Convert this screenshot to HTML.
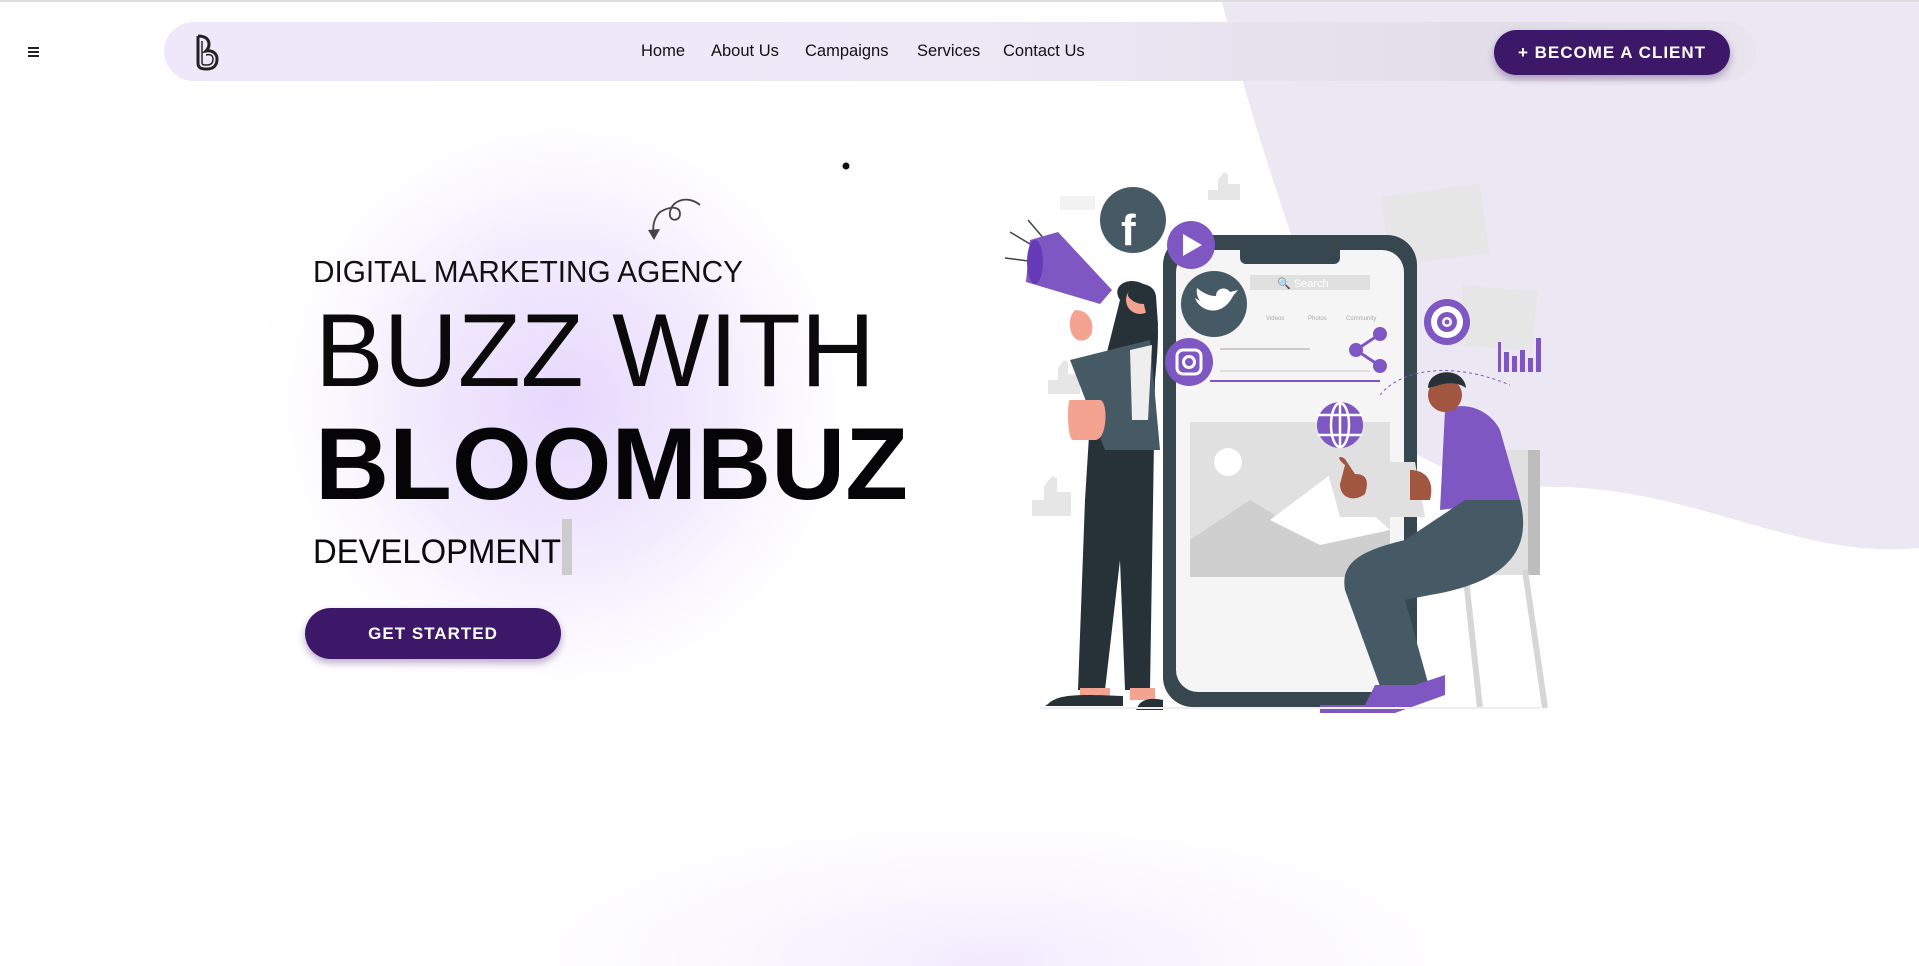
<!DOCTYPE html>
<html><head><meta charset="utf-8"><style>
*{margin:0;padding:0;box-sizing:border-box}
body{width:1919px;height:966px;overflow:hidden;background:#fff;font-family:"Liberation Sans",sans-serif;position:relative}
.abs{position:absolute}
.nav{left:164px;top:22px;width:1592px;height:59px;border-radius:30px;background:linear-gradient(90deg,#efe8fb 0%,#ede8f6 50%,#e2dde8 85%,#e8e5ec 100%)}
.nav a{position:absolute;top:20px;font-size:16.5px;color:#111;text-decoration:none;white-space:nowrap}
.btn{background:#3d1868;color:#fff;font-weight:bold;border-radius:30px;text-align:center;box-shadow:0 4px 8px rgba(60,20,100,.35);letter-spacing:1px}
</style></head><body>
<div class="abs" style="left:0;top:0;width:1919px;height:2px;background:#ddd"></div>
<svg class="abs" style="left:0;top:0" width="1919" height="966">
<defs>
<radialGradient id="g1" cx="563" cy="404" r="330" gradientUnits="userSpaceOnUse"><stop offset="0" stop-color="#e6d8fd"/><stop offset=".5" stop-color="#f3ecfd"/><stop offset="1" stop-color="#fff" stop-opacity="0"/></radialGradient>
<radialGradient id="g2" cx="990" cy="960" r="650" gradientUnits="userSpaceOnUse" gradientTransform="matrix(1 0 0 .3 0 672)"><stop offset="0" stop-color="#f2eafd"/><stop offset="1" stop-color="#fff" stop-opacity="0"/></radialGradient>
</defs>
<path d="M1222,2 C1250,120 1290,230 1320,320 C1360,440 1430,485 1560,487 C1700,490 1800,560 1919,548 L1919,2 Z" fill="#ece8f3"/>
<rect x="200" y="80" width="760" height="660" fill="url(#g1)"/>
<rect x="300" y="740" width="1400" height="226" fill="url(#g2)"/>
</svg>
<div class="abs nav">
<svg class="abs" style="left:30px;top:11px" width="26" height="38" viewBox="0 0 26 38"><path d="M4 3 V30 C4 36 9 36 13 36 C21 36 23 31 23 26 C23 20 18 17 12 18 C16 14 16 8 12 5 C9 3 6 3 4 3" fill="none" stroke="#222" stroke-width="3"/><path d="M8 8 V30 C8 32 10 32 13 32 C18 32 19 29 19 26 C19 22 16 21 12 22" fill="none" stroke="#222" stroke-width="1.5"/></svg>
<a style="left:477px">Home</a><a style="left:547px">About Us</a><a style="left:641px">Campaigns</a><a style="left:753px">Services</a><a style="left:839px">Contact Us</a>
</div>
<div class="abs" style="left:28px;top:47px;width:11px;height:1.5px;background:#222;box-shadow:0 4px 0 #222,0 8px 0 #222"></div>
<div class="abs btn" style="left:1494px;top:30px;width:236px;height:45px;line-height:45px;font-size:17px">+ BECOME A CLIENT</div>
<svg class="abs" style="left:0;top:0" width="1000" height="700">
<path d="M700 205 C688 195 672 200 670 212 C668 222 680 222 680 214 C680 206 670 206 660 212 C654 218 652 226 654 236" fill="none" stroke="#444" stroke-width="1.8"/>
<path d="M648 230 L654 240 L660 229 Z" fill="#444"/>
<circle cx="846" cy="166" r="3.5" fill="#111"/>
<text x="313" y="282" font-size="31" textLength="430" lengthAdjust="spacingAndGlyphs" fill="#111">DIGITAL MARKETING AGENCY</text>
<text x="315" y="386" font-size="104" textLength="560" lengthAdjust="spacingAndGlyphs" fill="#0a0a0a">BUZZ WITH</text>
<text x="315" y="499" font-size="102" font-weight="bold" textLength="593" lengthAdjust="spacingAndGlyphs" fill="#050508">BLOOMBUZ</text>
<text x="313" y="563" font-size="34" textLength="248" lengthAdjust="spacingAndGlyphs" fill="#0a0a0a">DEVELOPMENT</text>
<rect x="562" y="519" width="10" height="56" fill="#ccc"/>
</svg>
<div class="abs btn" style="left:305px;top:608px;width:256px;height:51px;line-height:51px;font-size:17px">GET STARTED</div>
<svg class="abs" style="left:0;top:0" width="1919" height="966">
<g fill="#e6e6e6">
<rect x="1385" y="190" width="100" height="70" transform="rotate(-8 1435 225)"/>
<rect x="1460" y="288" width="75" height="60" transform="rotate(5 1497 318)"/>
<rect x="1060" y="196" width="35" height="14" fill="#f2f2f2"/>
<path d="M1208 190 h10 v-10 l6 -8 l4 2 v10 h12 v16 h-32 z"/>
<path d="M1048 380 h10 v-12 l6 -8 l4 2 v12 h12 v20 h-32 z"/>
<path d="M1032 500 h12 v-14 l8 -10 l5 2 v14 h14 v24 h-39 z"/>
</g>
<rect x="1163" y="235" width="254" height="472" rx="30" fill="#37474f"/>
<rect x="1176" y="250" width="228" height="442" rx="22" fill="#f5f5f5"/>
<path d="M1240 250 h100 v8 a6 6 0 0 1 -6 6 h-88 a6 6 0 0 1 -6 -6 z" fill="#37474f"/>
<rect x="1250" y="275" width="120" height="15" fill="#e0e0e0"/>
<text x="1277" y="287" font-size="11" fill="#fff">🔍 Search</text>
<text x="1266" y="320" font-size="6" fill="#aaa">Videos</text><text x="1308" y="320" font-size="6" fill="#aaa">Photos</text><text x="1346" y="320" font-size="6" fill="#aaa">Community</text>
<rect x="1190" y="422" width="200" height="155" fill="#e0e0e0"/>
<path d="M1190 540 L1250 500 L1300 530 L1330 475 L1390 530 L1390 577 L1190 577 Z" fill="#cfcfcf"/>
<path d="M1270 520 L1330 475 L1390 530 L1320 545 Z" fill="#fff"/>
<circle cx="1228" cy="462" r="14" fill="#fff"/>
<rect x="1210" y="380" width="170" height="2" fill="#7e57c2"/>
<rect x="1220" y="348" width="90" height="2" fill="#ccc"/>
<rect x="1220" y="370" width="150" height="2" fill="#ddd"/>
<circle cx="1133" cy="220" r="33" fill="#455a64"/><text x="1121" y="245" font-size="44" font-weight="bold" fill="#fff">f</text>
<circle cx="1191" cy="245" r="24" fill="#7e57c2"/><path d="M1183 234 L1202 245 L1183 256 Z" fill="#fff"/>
<circle cx="1214" cy="304" r="33" fill="#455a64"/><path d="M1195 298 C1200 312 1222 318 1233 296 L1238 290 L1230 292 C1226 286 1216 288 1216 296 C1208 296 1202 292 1197 288 C1196 294 1198 300 1202 302 Z" fill="#fff"/>
<circle cx="1189" cy="362" r="24" fill="#7e57c2"/><rect x="1177" y="350" width="24" height="24" rx="6" fill="none" stroke="#fff" stroke-width="3"/><circle cx="1189" cy="362" r="5.5" fill="none" stroke="#fff" stroke-width="3"/>
<circle cx="1340" cy="425" r="23" fill="#7e57c2"/><g stroke="#fff" stroke-width="2.5" fill="none"><ellipse cx="1340" cy="425" rx="9" ry="22"/><path d="M1318 415 h44 M1318 435 h44 M1340 403 v44"/></g>
<g fill="#7e57c2"><circle cx="1380" cy="334" r="7"/><circle cx="1356" cy="350" r="7"/><circle cx="1380" cy="366" r="7"/></g><path d="M1380 334 L1356 350 L1380 366" stroke="#7e57c2" stroke-width="3" fill="none"/>
<circle cx="1447" cy="322" r="23" fill="#7e57c2"/><circle cx="1447" cy="322" r="16" fill="#fff"/><circle cx="1447" cy="322" r="10" fill="#7e57c2"/><circle cx="1447" cy="322" r="5" fill="#fff"/><circle cx="1447" cy="322" r="2.5" fill="#7e57c2"/>
<g fill="#7e57c2"><rect x="1498" y="342" width="3" height="30"/><rect x="1504" y="352" width="5" height="20"/><rect x="1512" y="356" width="5" height="16"/><rect x="1520" y="350" width="5" height="22"/><rect x="1528" y="358" width="5" height="14"/><rect x="1536" y="338" width="5" height="34"/></g>
<path d="M1380 395 C1400 370 1450 360 1510 385" stroke="#7e57c2" stroke-dasharray="3 3" fill="none"/>
<g stroke="#444" stroke-width="1.5"><path d="M1040 250 L1010 232 M1036 262 L1005 258 M1045 240 L1028 220"/></g>
<path d="M1030 240 L1058 232 L1112 290 L1100 304 L1026 282 Z" fill="#7e57c2"/>
<ellipse cx="1035" cy="262" rx="8" ry="22" fill="#673ab7"/>
<path d="M1120 300 C1110 285 1130 275 1145 285 C1160 295 1160 330 1155 380 L1150 690 L1125 690 L1120 560 L1105 690 L1078 690 L1085 500 L1090 420 Z" fill="#263238"/>
<path d="M1070 360 L1150 340 L1160 450 L1105 450 Z" fill="#455a64"/>
<path d="M1130 350 L1152 345 L1148 420 L1132 420 Z" fill="#eee"/>
<path d="M1070 400 h30 c8 0 8 40 -5 40 h-22 c-6 0 -6 -40 -3 -40 z" fill="#f4a391"/>
<path d="M1075 310 c-10 10 -5 35 10 30 c12 -4 10 -30 -10 -30 z" fill="#f4a391"/>
<path d="M1080 688 h30 v14 h-30 z M1130 688 h25 v12 h-25 z" fill="#f4a391"/>
<path d="M1048 704 c10 -10 30 -10 75 -8 v10 h-78 z M1138 706 c5 -8 15 -8 25 -6 v10 h-27 z" fill="#263238"/>
<circle cx="1140" cy="300" r="14" fill="#f4a391"/><path d="M1128 296 c0 -16 26 -16 28 0 l2 30 c-8 0 -12 -10 -14 -22 c-6 0 -12 -2 -16 -8 z" fill="#263238"/>
<path d="M1450 450 h90 v125 h-90 z" fill="#e0e0e0"/><rect x="1528" y="450" width="12" height="125" fill="#bdbdbd"/>
<path d="M1465 570 L1480 708 M1525 570 L1545 708" stroke="#d6d6d6" stroke-width="6"/>
<path d="M1445 410 c20 -10 45 0 55 20 l20 70 l-80 10 z" fill="#7e57c2"/>
<path d="M1520 500 c10 40 0 80 -90 95 l-25 5 l25 90 l-45 10 l-40 -110 c-5 -30 20 -40 60 -50 l60 -40 z" fill="#455a64"/>
<path d="M1320 705 h45 l10 -20 h40 l30 -10 l0 20 l-50 18 h-75 z" fill="#7e57c2"/>
<path d="M1325 462 h90 l10 55 h-85 z" fill="#e0e0e0"/>
<circle cx="1445" cy="395" r="17" fill="#a0563f"/><path d="M1428 388 c0 -20 36 -22 38 0 c-8 -6 -20 -6 -30 -2 z" fill="#263238"/>
<path d="M1345 465 c-10 -8 -5 -10 0 -6 l10 15 c10 0 15 5 10 20 c-10 8 -25 5 -25 -10 z" fill="#a0563f"/>
<path d="M1410 470 c15 0 25 10 20 30 l-20 0 z" fill="#a0563f"/>
<rect x="1040" y="707" width="500" height="2" fill="#eee"/>
</svg>
</body></html>
